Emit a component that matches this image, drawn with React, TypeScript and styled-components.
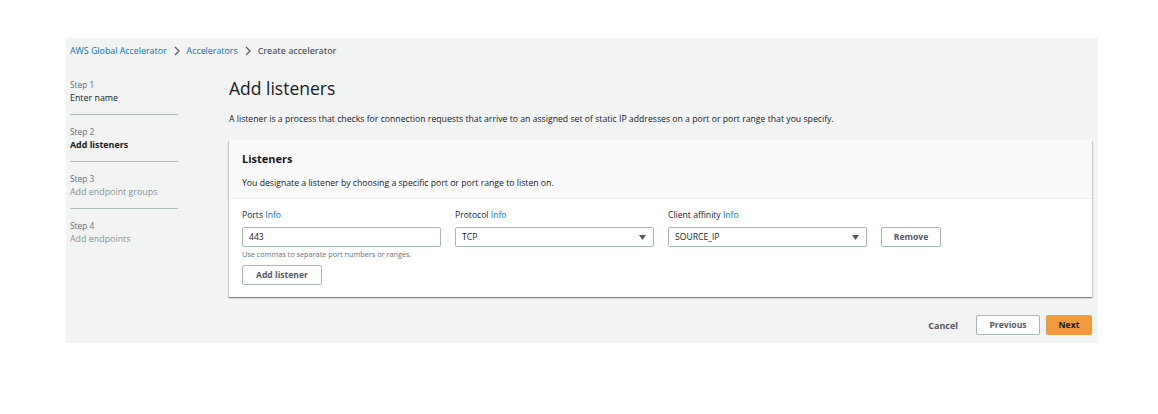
import React from 'react';
import styled, { createGlobalStyle } from 'styled-components';

const GlobalStyle = createGlobalStyle`
  body {
    margin: 0;
    background: #fff;
    font-family: "Open Sans", "Noto Sans", Arial, sans-serif;
    color: #16191f;
  }
`;

const Page = styled.div`
  padding: 38px 0 0 66px;
`;

const Panel = styled.div`
  width: 1032px;
  height: 305px;
  box-sizing: border-box;
  background: #f2f3f3;
  padding: 6px 6px 0 4px;
`;

const Crumbs = styled.nav`
  display: flex;
  align-items: center;
  gap: 7px;
  height: 14px;
  font-size: 8.85px;
  line-height: 14px;
`;

const CrumbLink = styled.a`
  color: #0073bb;
  text-decoration: none;
`;

const CrumbCurrent = styled.span`
  color: #545b64;
  font-weight: 600;
`;

const Body = styled.div`
  display: flex;
  gap: 51px;
  margin-top: 18px;
`;

const Steps = styled.ol`
  list-style: none;
  margin: 3px 0 0;
  padding: 0;
  width: 108px;
  flex: none;
`;

const StepItem = styled.li<{ $last?: boolean }>`
  padding: 0 0 9px;
  margin-bottom: 11px;
  border-bottom: ${(p) => (p.$last ? 'none' : '1px solid #aab7b8')};
`;

const StepNum = styled.div`
  font-size: 8.3px;
  line-height: 12px;
  color: #687078;
`;

const StepTitle = styled.div<{ $state: 'done' | 'active' | 'todo' }>`
  font-size: 8.9px;
  line-height: 14px;
  color: ${(p) => (p.$state === 'todo' ? '#879596' : '#16191f')};
  font-weight: ${(p) => (p.$state === 'active' ? 700 : 400)};
`;

const Main = styled.div`
  width: 863px;
`;

const Heading = styled.h1`
  margin: 0;
  font-size: 17.5px;
  line-height: 24px;
  font-weight: 400;
  color: #16191f;
`;

const Lead = styled.p`
  margin: 12px 0 0;
  font-size: 8.7px;
  line-height: 14px;
`;

const Card = styled.section`
  margin-top: 14px;
  background: #fff;
  box-shadow: 0 1px 1px 0 rgba(0, 28, 36, 0.3), 1px 1px 1px 0 rgba(0, 28, 36, 0.15),
    -1px 1px 1px 0 rgba(0, 28, 36, 0.15);
`;

const CardHeader = styled.header`
  background: #fafafa;
  border-bottom: 1px solid #eaeded;
  padding: 11px 13px 9px;
  height: 59px;
  box-sizing: border-box;
`;

const CardTitle = styled.h2`
  margin: 0;
  font-size: 11px;
  line-height: 16px;
  font-weight: 700;
`;

const CardDesc = styled.p`
  margin: 9px 0 0;
  font-size: 8.7px;
  line-height: 14px;
`;

const CardBody = styled.div`
  padding: 10px 13px 12px;
`;

const FieldRow = styled.div`
  display: flex;
  gap: 14px;
  align-items: flex-end;
`;

const Field = styled.div`
  width: 199px;
`;

const Label = styled.label`
  display: block;
  font-size: 8.6px;
  line-height: 13px;
  margin-bottom: 5px;
`;

const Info = styled.a`
  color: #0073bb;
  text-decoration: none;
`;

const Input = styled.div`
  position: relative;
  height: 20px;
  box-sizing: border-box;
  border: 1px solid #aab7b8;
  border-radius: 2px;
  background: #fff;
  padding: 0 6px;
  font-size: 8.6px;
  line-height: 18px;
`;

const Caret = styled.svg`
  position: absolute;
  right: 7px;
  top: 7px;
`;

const Hint = styled.div`
  margin-top: 2px;
  font-size: 7.3px;
  line-height: 10px;
  color: #687078;
`;

const Button = styled.button<{ $primary?: boolean; $w: number }>`
  display: block;
  width: ${(p) => p.$w}px;
  height: 20px;
  padding: 0;
  border-radius: 2px;
  border: 1px solid ${(p) => (p.$primary ? '#f19a3e' : '#aab7b8')};
  background: ${(p) => (p.$primary ? '#f19a3e' : '#fff')};
  color: ${(p) => (p.$primary ? '#16191f' : '#545b64')};
  font-family: inherit;
  font-size: 8.6px;
  font-weight: 700;
`;

const TextButton = styled.button`
  border: none;
  background: none;
  padding: 0;
  color: #545b64;
  font-family: inherit;
  font-size: 9px;
  font-weight: 700;
  margin-right: 12px;
`;

const AddRow = styled.div`
  display: flex;
  margin-top: 6px;
`;

const Footer = styled.div`
  display: flex;
  justify-content: flex-end;
  align-items: center;
  gap: 6px;
  margin-top: 18px;
`;

const Chevron = () => (
  <svg width="6" height="10" viewBox="0 0 6 10">
    <path d="M1 1l4 4-4 4" fill="none" stroke="#545b64" strokeWidth="1.3" />
  </svg>
);

const Select = ({ value }: { value: string }) => (
  <Input>
    {value}
    <Caret width="7" height="5" viewBox="0 0 7 5">
      <path d="M0 0h7L3.5 5z" fill="#545b64" />
    </Caret>
  </Input>
);

const steps = [
  { n: 'Step 1', t: 'Enter name', s: 'done' as const },
  { n: 'Step 2', t: 'Add listeners', s: 'active' as const },
  { n: 'Step 3', t: 'Add endpoint groups', s: 'todo' as const },
  { n: 'Step 4', t: 'Add endpoints', s: 'todo' as const },
];

export default function App() {
  return (
    <Page>
      <GlobalStyle />
      <Panel>
        <Crumbs>
          <CrumbLink>AWS Global Accelerator</CrumbLink>
          <Chevron />
          <CrumbLink>Accelerators</CrumbLink>
          <Chevron />
          <CrumbCurrent>Create accelerator</CrumbCurrent>
        </Crumbs>
        <Body>
          <Steps>
            {steps.map((s, i) => (
              <StepItem key={s.n} $last={i === steps.length - 1}>
                <StepNum>{s.n}</StepNum>
                <StepTitle $state={s.s}>{s.t}</StepTitle>
              </StepItem>
            ))}
          </Steps>
          <Main>
            <Heading>Add listeners</Heading>
            <Lead>
              A listener is a process that checks for connection requests that arrive to an assigned set of static IP
              addresses on a port or port range that you specify.
            </Lead>
            <Card>
              <CardHeader>
                <CardTitle>Listeners</CardTitle>
                <CardDesc>You designate a listener by choosing a specific port or port range to listen on.</CardDesc>
              </CardHeader>
              <CardBody>
                <FieldRow>
                  <Field>
                    <Label>
                      Ports <Info>Info</Info>
                    </Label>
                    <Input>443</Input>
                  </Field>
                  <Field>
                    <Label>
                      Protocol <Info>Info</Info>
                    </Label>
                    <Select value="TCP" />
                  </Field>
                  <Field>
                    <Label>
                      Client affinity <Info>Info</Info>
                    </Label>
                    <Select value="SOURCE_IP" />
                  </Field>
                  <Button $w={60}>Remove</Button>
                </FieldRow>
                <Hint>Use commas to separate port numbers or ranges.</Hint>
                <AddRow>
                  <Button $w={80}>Add listener</Button>
                </AddRow>
              </CardBody>
            </Card>
            <Footer>
              <TextButton>Cancel</TextButton>
              <Button $w={64}>Previous</Button>
              <Button $w={46} $primary>
                Next
              </Button>
            </Footer>
          </Main>
        </Body>
      </Panel>
    </Page>
  );
}
